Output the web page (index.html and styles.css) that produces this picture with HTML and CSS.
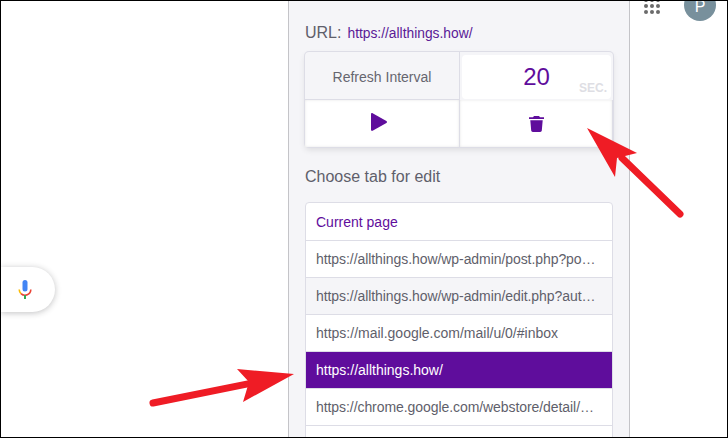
FILE: index.html
```html
<!DOCTYPE html>
<html lang="en">
<head>
<meta charset="utf-8">
<title>Auto Refresh</title>
<link rel="stylesheet" href="styles.css">
</head>
<body>
<div class="frame">
  <div class="left">
    <div class="pill">
      <svg class="mic" width="14" height="20" viewBox="0 0 14 20">
        <rect x="4.5" y="0" width="5" height="11.5" rx="2.5" fill="#4285f4"/>
        <path d="M1.200 9.500A5.800 5.800 0 0 0 3 13.600" fill="none" stroke="#fbbc04" stroke-width="1.600"/>
        <path d="M3 13.600A5.800 5.800 0 0 0 12.800 9.500" fill="none" stroke="#ea4335" stroke-width="1.600"/>
        <rect x="6" y="15" width="2" height="4" fill="#34a853"/>
      </svg>
    </div>
  </div>
  <main class="panel">
    <div class="url"><span class="url-label">URL:</span> <span class="url-value">https://allthings.how/</span></div>
    <div class="controls">
      <div class="cell label">Refresh Interval</div>
      <div class="cell value"><span class="num">20</span><span class="sec">SEC.</span></div>
      <div class="cell btn">
        <svg class="play" width="16" height="18" viewBox="0 0 16 18"><path d="M0 1.200C0 .3.800-.2 1.600.2L15.400 8C16.200 8.500 16.200 9.500 15.400 10L1.600 17.800C.8 18.200 0 17.700 0 16.800Z" fill="#5f0d9c"/></svg>
      </div>
      <div class="cell btn">
        <svg class="trash" width="15" height="16" viewBox="0 0 15 16"><path d="M5 0H10L11 1.300H15V3H0V1.300H4ZM1.300 4.200H13.700L12.800 14.600C12.700 15.400 12.100 16 11.200 16H3.800C2.900 16 2.300 15.400 2.200 14.600Z" fill="#5f0d9c"/></svg>
      </div>
    </div>
    <h2 class="choose">Choose tab for edit</h2>
    <ul class="tabs">
      <li class="tab current">Current page</li>
      <li class="tab long">https://allthings.how/wp-admin/post.php?po…</li>
      <li class="tab long shaded">https://allthings.how/wp-admin/edit.php?aut…</li>
      <li class="tab">https://mail.google.com/mail/u/0/#inbox</li>
      <li class="tab active">https://allthings.how/</li>
      <li class="tab long">https://chrome.google.com/webstore/detail/…</li>
      <li class="tab"></li>
    </ul>
  </main>
  <div class="right">
    <svg class="apps" width="16" height="14" viewBox="0 0 16 14" fill="#6b6b6b">
      <circle cx="2" cy="-1" r="2"/><circle cx="8" cy="-1" r="2"/><circle cx="14" cy="-1" r="2"/>
      <circle cx="2" cy="5" r="2"/><circle cx="8" cy="5" r="2"/><circle cx="14" cy="5" r="2"/>
      <circle cx="2" cy="11" r="2"/><circle cx="8" cy="11" r="2"/><circle cx="14" cy="11" r="2"/>
    </svg>
    <div class="avatar">P</div>
  </div>
  <svg class="arrows" width="728" height="438" viewBox="0 0 728 438">
    <path d="M153 403L262 381" stroke="#ef1c25" stroke-width="7" stroke-linecap="round" fill="none"/>
    <path d="M237 369L294 374L243 402L249 382Z" fill="#ef1c25"/>
    <path d="M680 214L622 158" stroke="#ef1c25" stroke-width="7" stroke-linecap="round" fill="none"/>
    <path d="M587 128L637 153L617 158L615 177Z" fill="#ef1c25"/>
  </svg>
</div>
</body>
</html>
```

FILE: styles.css
```css
* { box-sizing: border-box; }
html, body { margin: 0; padding: 0; }
body { width: 728px; height: 438px; overflow: hidden; background: #fff; font-family: "Liberation Sans", Arial, sans-serif; }
.frame { position: relative; display: flex; width: 728px; height: 438px; overflow: hidden; border: 1px solid #000; }
.left { width: 287px; flex: none; padding-top: 266px; }
.pill { width: 54px; height: 45px; display: flex; align-items: center; justify-content: flex-end; padding-right: 23px; background: #fff; border-radius: 0 23px 23px 0; box-shadow: 0 1px 6px rgba(32, 33, 36, .28); }
.panel { width: 342px; height: 436px; flex: none; padding: 0 17px 0 16px; background: #f5f5f8; border-left: 1px solid #c4c4c8; border-right: 1px solid #c4c4c8; }
.url { height: 24px; margin-top: 20px; color: #5f5f6b; display: flex; align-items: center; gap: 6px; }
.url-label { font-size: 16px; }
.url-value { font-size: 13.800px; color: #5a1a96; }
.controls { display: grid; grid-template-columns: 155px 153px; grid-template-rows: 48px 47px; margin-top: 7px; width: 308px; border-radius: 4px; box-shadow: 0 0 0 1px #dddde6, 0 3px 6px rgba(0, 0, 0, .1); }
.cell { display: flex; align-items: center; justify-content: center; position: relative; }
.label { padding-top: 2px; font-size: 14px; color: #66666f; border-right: 1px solid #dddde6; border-bottom: 1px solid #dddde6; }
.value { background: #fff; margin: 3px 2px 1px 2px; border-radius: 4px; }
.num { font-size: 24px; color: #5f0d9c; }
.sec { position: absolute; right: 4px; bottom: 4px; font-size: 12px; font-weight: 700; color: #dedee4; }
.btn { background: #fff; border-right: 1px solid #dddde6; box-shadow: inset 0 0 3px rgba(0, 0, 0, .1); }
.play { margin: 0 6px 3px 0; }
.choose { margin: 20px 0 15px; font-size: 16px; line-height: 20px; font-weight: 400; color: #5f5f6b; }
.tabs { list-style: none; margin: 0; padding: 0; width: 308px; background: #fff; border: 1px solid #dddde6; border-radius: 4px 4px 0 0; }
.tab { height: 37px; line-height: 36px; padding: 0 10px; font-size: 14px; color: #5f5f6b; border-bottom: 1px solid #dddde6; white-space: nowrap; overflow: hidden; }
.long { letter-spacing: -.07px; }
.current { color: #5f0d9c; height: 38px; line-height: 38px; }
.shaded { background: #f5f5f8; }
.active { background: #5f0d9c; color: #fff; }
.right { flex: 1; display: flex; padding-left: 14px; }
.apps { flex: none; overflow: visible; }
.avatar { width: 32px; height: 32px; margin: -12px 0 0 24px; border-radius: 50%; background: #78909c; color: #fff; font-size: 16px; line-height: 35px; text-align: center; flex: none; }
.arrows { position: absolute; left: -1px; top: -1px; pointer-events: none; }
```
